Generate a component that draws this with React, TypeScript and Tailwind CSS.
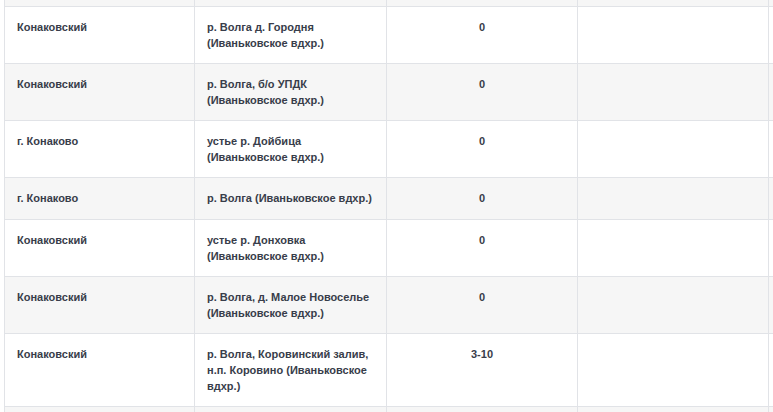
import React from "react";

type Row = { district: string; place: string[]; value: string };

const rows: Row[] = [
  { district: "Конаковский", place: ["р. Волга д. Городня", "(Иваньковское вдхр.)"], value: "0" },
  { district: "Конаковский", place: ["р. Волга, б/о УПДК", "(Иваньковское вдхр.)"], value: "0" },
  { district: "г. Конаково", place: ["устье р. Дойбица", "(Иваньковское вдхр.)"], value: "0" },
  { district: "г. Конаково", place: ["р. Волга (Иваньковское вдхр.)"], value: "0" },
  { district: "Конаковский", place: ["устье р. Донховка", "(Иваньковское вдхр.)"], value: "0" },
  { district: "Конаковский", place: ["р. Волга, д. Малое Новоселье", "(Иваньковское вдхр.)"], value: "0" },
  {
    district: "Конаковский",
    place: ["р. Волга, Коровинский залив,", "н.п. Коровино (Иваньковское", "вдхр.)"],
    value: "3-10",
  },
];

const grid = "grid grid-cols-[190px_192px_191px_191px] border-l border-[#e1e3e7]";
const cell = "border-r border-[#e1e3e7] px-3 py-3";

export default function App() {
  return (
    <div
      className="w-[773px] h-[412px] overflow-hidden bg-white pl-1 text-[11px] leading-4 font-bold text-[#383d4a]"
      style={{ fontFamily: '"Liberation Sans", Arial, sans-serif' }}
    >
      {/* cut-off row above */}
      <div className={`${grid} bg-[#f6f6f6] border-b h-[7px]`}>
        <div className="border-r border-[#e1e3e7]" />
        <div className="border-r border-[#e1e3e7]" />
        <div className="border-r border-[#e1e3e7]" />
        <div className="border-r border-[#e1e3e7]" />
      </div>

      {rows.map((r, i) => (
        <div
          key={i}
          className={`${grid} border-b min-h-[42px] ${i % 2 === 1 ? "bg-[#f6f6f6]" : "bg-white"}`}
        >
          <div className={cell}>{r.district}</div>
          <div className={cell}>
            {r.place.map((line) => (
              <div key={line}>{line}</div>
            ))}
          </div>
          <div className={`${cell} text-center`}>{r.value}</div>
          <div className={cell} />
        </div>
      ))}

      {/* cut-off row below */}
      <div className={`${grid} bg-[#f6f6f6] h-[20px]`}>
        <div className="border-r border-[#e1e3e7]" />
        <div className="border-r border-[#e1e3e7]" />
        <div className="border-r border-[#e1e3e7]" />
        <div className="border-r border-[#e1e3e7]" />
      </div>
    </div>
  );
}
